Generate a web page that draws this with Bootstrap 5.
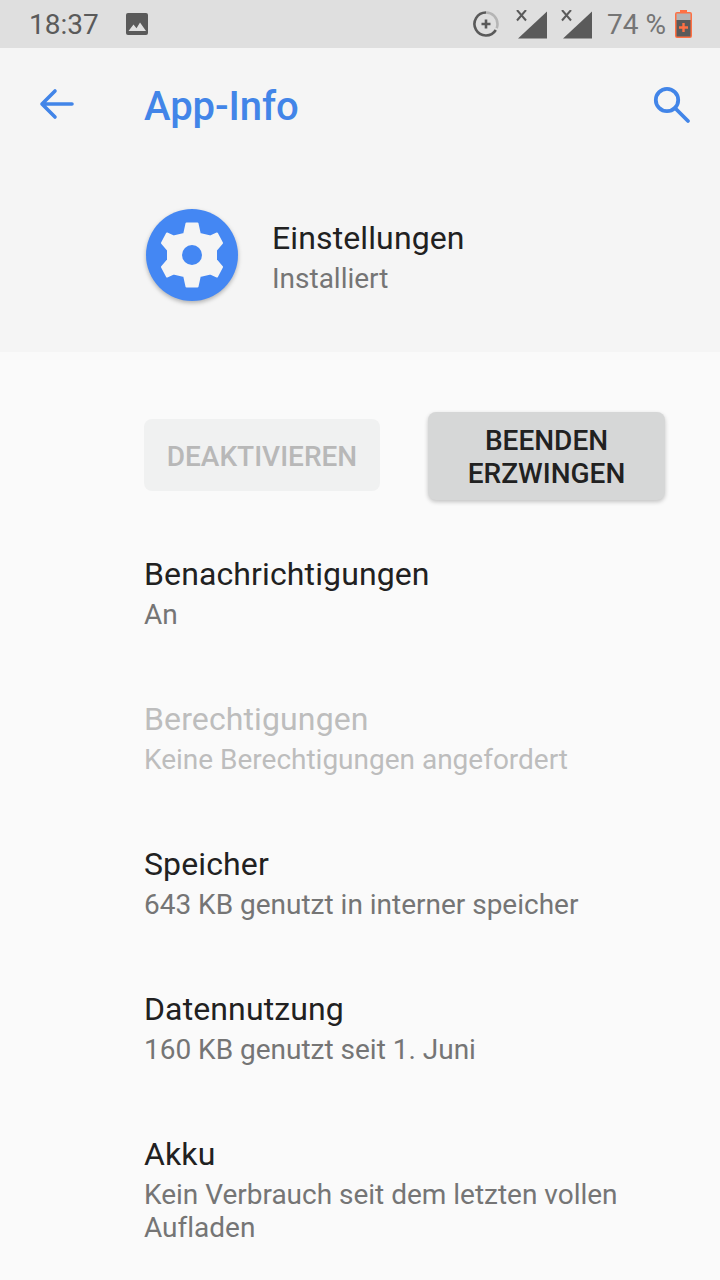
<!DOCTYPE html>
<html lang="en">
<head>
  <title>App-Info</title>
  <meta charset="UTF-8" />
  <meta name="viewport" content="width=device-width, initial-scale=1.0" />
  <link href="https://cdn.jsdelivr.net/npm/bootstrap@5.3.0/dist/css/bootstrap.min.css" rel="stylesheet">
  <style>
    html, body { height: 100%; margin: 0; }
    body {
      background: #fafafa;
      font-family: Roboto, "Liberation Sans", sans-serif;
      overflow: hidden;
    }
    .status-strip {
      height: 48px;
      background: #dfdfdf;
      color: #5a5a5a;
      padding: 0 28px 0 29px;
    }
    .status-time { font-size: 28px; line-height: 48px; margin: 2px 26px 0 0; }
    .status-pct { font-size: 28px; line-height: 48px; color: #757575; margin: 2px 9px 0 1px; }
    .status-ring { margin-right: 17px; }
    .status-bars { margin-right: 13px; }
    .head-zone { height: 304px; background: #f5f5f5; }
    .app-bar { height: 112px; padding: 0 28px 0 37px; }
    .app-title {
      font-size: 40px;
      font-weight: 500;
      color: #4285e8;
      margin: 6px 0 0 69px;
      line-height: 1;
      letter-spacing: -.05px;
    }
    .app-row { padding: 48px 0 0 145px; gap: 33px; }
    .app-logo { width: 94px; height: 94px; filter: drop-shadow(0 2px 2px rgba(0,0,0,.28)); }
    .app-text { margin-top: 3px; }
    .main-line { font-size: 32px; line-height: 40px; color: #212121; margin-bottom: 4px; letter-spacing: .12px; }
    .sub-line { font-size: 28px; line-height: 33px; color: #757575; letter-spacing: -.01px; }
    .btn-zone { padding: 60px 55px 0 144px; gap: 48px; height: 202px; }
    .btn-off, .btn-on {
      font-size: 28px;
      font-weight: 500;
      line-height: 33px;
      border-radius: 8px;
      border: 0;
      padding: 2px 0 0;
    }
    .btn-off { width: 236px; height: 72px; margin-top: 7px; background: #f0f1f1; color: #b8b8b8; }
    .btn-off:disabled { background: #f0f1f1; color: #b8b8b8; opacity: 1; }
    .btn-on {
      width: 237px;
      height: 88px;
      background: #d6d7d7;
      color: #212121;
      box-shadow: 0 2px 4px rgba(0,0,0,.22);
    }
    .btn-on:hover { background: #d6d7d7; color: #212121; }
    .set-list { padding-left: 144px; padding-right: 40px; }
    .set-item { height: 145px; padding: 0; background: none; border: 0; }
    .set-item.is-off .main-line, .set-item.is-off .sub-line { color: #bdbdbd; }
  </style>
</head>
<body>

  <div class="status-strip d-flex align-items-center">
    <span class="status-time">18:37</span>
    <svg width="24" height="24" viewBox="0 0 24 24"><path fill="#5a5a5a" d="M3 1h18a2 2 0 0 1 2 2v18a2 2 0 0 1-2 2H3a2 2 0 0 1-2-2V3a2 2 0 0 1 2-2z"/><path fill="#dfdfdf" d="M3.500 19l5-6.500 3 3.800 3.500-5.800 6 8.500z"/></svg>
    <div class="ms-auto d-flex align-items-center">
      <svg class="status-ring" width="26" height="26" viewBox="0 0 26 26" fill="none"><path d="M13 1.500A11.500 11.500 0 0 1 24.500 13c0 1.500-.3 3-.8 4.200" stroke="#b5b5b5" stroke-width="2.600"/><path d="M22.800 19A11.500 11.500 0 1 1 13 1.500" stroke="#5a5a5a" stroke-width="2.600"/><path d="M13 8.500v9M8.500 13h9" stroke="#5a5a5a" stroke-width="2.600"/></svg>
      <svg class="status-bars" width="32" height="29" viewBox="0 0 32 29"><path fill="#5a5a5a" d="M31 1.500V28.500H2z"/><path d="M1 0l9 10.500M10 0L1 10.500" stroke="#5a5a5a" stroke-width="2"/></svg>
      <svg class="status-bars" width="32" height="29" viewBox="0 0 32 29"><path fill="#5a5a5a" d="M31 1.500V28.500H2z"/><path d="M1 0l9 10.500M10 0L1 10.500" stroke="#5a5a5a" stroke-width="2"/></svg>
      <span class="status-pct">74 %</span>
      <svg width="17" height="28" viewBox="0 0 17 28"><path fill="#ff7043" d="M5 0h7v2h3a2 2 0 0 1 2 2v22a2 2 0 0 1-2 2H2a2 2 0 0 1-2-2V4a2 2 0 0 1 2-2h3z"/><path fill="#b5b5b5" d="M1.500 3.500h14V10h-14z"/><path fill="#5a5a5a" d="M1.500 10h14v16.500h-14z"/><path d="M8.500 13v9M4 17.500h9" stroke="#ff7043" stroke-width="2.400"/></svg>
    </div>
  </div>

  <div class="head-zone">
    <div class="app-bar d-flex align-items-center">
      <svg width="38" height="38" viewBox="0 0 38 38" fill="none"><path d="M35 19H5M18 6L5 19l13 13" stroke="#4285e8" stroke-width="3.600" stroke-linecap="round" stroke-linejoin="round"/></svg>
      <h1 class="app-title">App-Info</h1>
      <svg class="ms-auto" width="42" height="42" viewBox="0 0 42 42" fill="none"><circle cx="17" cy="17" r="11.200" stroke="#4285e8" stroke-width="3.800"/><path d="M25 25l13 13" stroke="#4285e8" stroke-width="3.800" stroke-linecap="round"/></svg>
    </div>
    <div class="app-row d-flex align-items-center">
      <svg class="app-logo" viewBox="0 0 94 94">
        <circle cx="47" cy="47" r="46" fill="#4487f3"/>
        <g transform="translate(47 47)">
          <polygon fill="#f5f5f5" stroke="#f5f5f5" stroke-width="2" stroke-linejoin="round" points="5.500,-31.500 7.800,-21 18.500,-18.500 25,-21.500 30,-12 24,-5 24,5 30,12 25,21.500 18.500,18.500 7.800,21 5.500,31.500 -5.500,31.500 -7.800,21 -18.500,18.500 -25,21.500 -30,12 -24,5 -24,-5 -30,-12 -25,-21.500 -18.500,-18.500 -7.800,-21 -5.500,-31.500"/>
          <circle r="10" fill="#4487f3"/>
        </g>
      </svg>
      <div class="app-text">
        <div class="main-line">Einstellungen</div>
        <div class="sub-line">Installiert</div>
      </div>
    </div>
  </div>

  <div class="btn-zone d-flex align-items-start">
    <button class="btn btn-off" disabled>DEAKTIVIEREN</button>
    <button class="btn btn-on">BEENDEN<br>ERZWINGEN</button>
  </div>

  <div class="set-list list-group list-group-flush">
    <div class="set-item list-group-item">
      <div class="main-line">Benachrichtigungen</div>
      <div class="sub-line">An</div>
    </div>
    <div class="set-item list-group-item is-off">
      <div class="main-line">Berechtigungen</div>
      <div class="sub-line">Keine Berechtigungen angefordert</div>
    </div>
    <div class="set-item list-group-item">
      <div class="main-line">Speicher</div>
      <div class="sub-line">643 KB genutzt in interner speicher</div>
    </div>
    <div class="set-item list-group-item">
      <div class="main-line">Datennutzung</div>
      <div class="sub-line">160 KB genutzt seit 1. Juni</div>
    </div>
    <div class="set-item list-group-item">
      <div class="main-line">Akku</div>
      <div class="sub-line">Kein Verbrauch seit dem letzten vollen Aufladen</div>
    </div>
  </div>

  <script src="https://cdn.jsdelivr.net/npm/bootstrap@5.3.0/dist/js/bootstrap.bundle.min.js"></script>
</body>
</html>
